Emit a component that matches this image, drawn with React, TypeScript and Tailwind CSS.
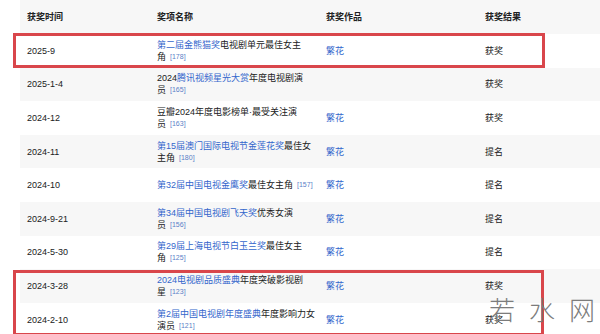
import { ReactElement, ReactNode } from "react";

type Row = {
  date: string;
  name: ReactNode;
  note: string;
  work: boolean;
  result: string;
  shade: boolean;
};

const L = ({ children }: { children: ReactNode }) => (
  <span className="text-[#3366cc]">{children}</span>
);

const ROWS: Row[] = [
  {
    date: "2025-9",
    name: (
      <>
        <L>第二届金熊猫奖</L>电视剧单元最佳女主
        <br />角
      </>
    ),
    note: "[178]",
    work: true,
    result: "获奖",
    shade: false,
  },
  {
    date: "2025-1-4",
    name: (
      <>
        2024<L>腾讯视频星光大赏</L>年度电视剧演
        <br />员
      </>
    ),
    note: "[165]",
    work: false,
    result: "获奖",
    shade: true,
  },
  {
    date: "2024-12",
    name: (
      <>
        豆瓣2024年度电影榜单·最受关注演
        <br />员
      </>
    ),
    note: "[163]",
    work: true,
    result: "获奖",
    shade: false,
  },
  {
    date: "2024-11",
    name: (
      <>
        <L>第15届澳门国际电视节金莲花奖</L>最佳女
        <br />主角
      </>
    ),
    note: "[180]",
    work: true,
    result: "提名",
    shade: true,
  },
  {
    date: "2024-10",
    name: (
      <>
        <L>第32届中国电视金鹰奖</L>最佳女主角
      </>
    ),
    note: "[157]",
    work: true,
    result: "提名",
    shade: false,
  },
  {
    date: "2024-9-21",
    name: (
      <>
        <L>第34届中国电视剧飞天奖</L>优秀女演
        <br />员
      </>
    ),
    note: "[156]",
    work: true,
    result: "提名",
    shade: true,
  },
  {
    date: "2024-5-30",
    name: (
      <>
        <L>第29届上海电视节白玉兰奖</L>最佳女主
        <br />角
      </>
    ),
    note: "[125]",
    work: true,
    result: "提名",
    shade: false,
  },
  {
    date: "2024-3-28",
    name: (
      <>
        <L>2024电视剧品质盛典</L>年度突破影视剧
        <br />星
      </>
    ),
    note: "[123]",
    work: true,
    result: "获奖",
    shade: true,
  },
  {
    date: "2024-2-10",
    name: (
      <>
        <L>第2届中国电视剧年度盛典</L>年度影响力女
        <br />演员
      </>
    ),
    note: "[121]",
    work: true,
    result: "获奖",
    shade: false,
  },
];

const App = (): ReactElement => {
  return (
    <div className="relative w-[600px] h-[334px] overflow-hidden bg-white font-['Liberation_Sans','Noto_Sans_CJK_SC',sans-serif] text-[9px] leading-[12px] text-[#202122]">
      <div className="ml-[20px]">
        <div className="grid grid-cols-[130px_169px_159px_122px] h-[34px] items-center bg-[#f7f7f7] font-bold">
          <div className="pl-[7px]">获奖时间</div>
          <div className="pl-[7px]">奖项名称</div>
          <div className="pl-[7px]">获奖作品</div>
          <div className="pl-[7px]">获奖结果</div>
        </div>
        {ROWS.map((row) => {
          return (
            <div
              key={row.date}
              className={
                row.shade
                  ? "grid grid-cols-[130px_169px_159px_122px] h-[33.6px] items-center bg-[#f7f7f7]"
                  : "grid grid-cols-[130px_169px_159px_122px] h-[33.6px] items-center bg-white"
              }
            >
              <div className="pl-[7px]">{row.date}</div>
              <div className="pl-[7px]">
                {row.name}
                <sup className="ml-[4px] text-[7px] text-[#5b7fc7] relative -top-[1px]">
                  {row.note}
                </sup>
              </div>
              <div className="pl-[7px] text-[#3366cc]">{row.work ? "繁花" : ""}</div>
              <div className="pl-[7px]">{row.result}</div>
            </div>
          );
        })}
      </div>

      {/* highlight boxes */}
      <div className="absolute left-[13px] top-[33px] w-[532px] h-[35px] border-[3px] border-[#d9464b]" />
      <div className="absolute left-[13px] top-[270px] w-[531px] h-[66px] border-[3px] border-[#d9464b]" />

      {/* watermark */}
      <div className="absolute left-[489px] top-[294px] flex gap-[14px] text-[26px] leading-[30px] text-[#7c7c7c] font-['Noto_Sans_CJK_SC',sans-serif] font-light">
        <span>若</span>
        <span>水</span>
        <span>网</span>
      </div>
    </div>
  );
};

export default App;
